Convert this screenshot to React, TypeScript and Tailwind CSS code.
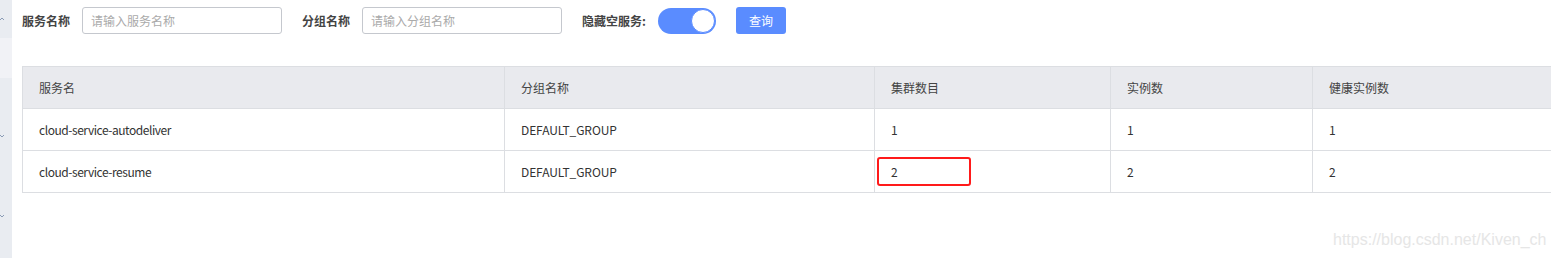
import React from "react";

const font = { fontFamily: '"Noto Sans CJK SC", "Noto Sans", sans-serif' };

const rows = [
  { name: "cloud-service-autodeliver", group: "DEFAULT_GROUP", cluster: "1", inst: "1", healthy: "1", mark: false },
  { name: "cloud-service-resume", group: "DEFAULT_GROUP", cluster: "2", inst: "2", healthy: "2", mark: true },
];

export default function App() {
  return (
    <div
      className="relative flex w-[1551px] h-[258px] overflow-hidden bg-white text-[12px] text-[#333]"
      style={font}
    >
      {/* sidebar strip */}
      <div className="relative w-[12px] shrink-0 bg-[#e9ecf1] flex flex-col">
        <div className="h-[38px]" />
        <div className="h-[40px] bg-[#f1f2f6]" />
        <svg className="absolute left-0 top-[17px]" width="4" height="4" viewBox="0 0 4 4">
          <path d="M0 3 L2 1 L4 3" stroke="#8a9bb5" strokeWidth="1" fill="none" />
        </svg>
        <svg className="absolute left-0 top-[134px]" width="4" height="4" viewBox="0 0 4 4">
          <path d="M0 1 L2 3 L4 1" stroke="#8a9bb5" strokeWidth="1" fill="none" />
        </svg>
        <svg className="absolute left-0 top-[214px]" width="4" height="4" viewBox="0 0 4 4">
          <path d="M0 1 L2 3 L4 1" stroke="#8a9bb5" strokeWidth="1" fill="none" />
        </svg>
      </div>

      <div className="flex-1 pl-[10px]">
        {/* search bar */}
        <div className="flex items-center mt-[7px] h-[27px]">
          <span className="font-bold text-[#444] leading-none">服务名称</span>
          <div className="ml-[12px] w-[200px] h-[27px] border border-[#c5c8ce] rounded-[3px] flex items-center pl-[8px] text-[#aaa]">
            请输入服务名称
          </div>
          <span className="ml-[20px] font-bold text-[#444] leading-none">分组名称</span>
          <div className="ml-[12px] w-[200px] h-[27px] border border-[#c5c8ce] rounded-[3px] flex items-center pl-[8px] text-[#aaa]">
            请输入分组名称
          </div>
          <span className="ml-[20px] font-bold text-[#444] leading-none">隐藏空服务:</span>
          <div className="ml-[12px] w-[58px] h-[26px] rounded-full bg-[#5a8cff] flex items-center justify-end p-[1px]">
            <div className="w-[24px] h-[24px] rounded-full bg-white border border-[#5a8cff]" />
          </div>
          <div className="ml-[20px] w-[50px] h-[27px] rounded-[3px] bg-[#5a8cff] text-white flex items-center justify-center">
            查询
          </div>
        </div>

        {/* table */}
        <table className="mt-[32px] border-collapse table-fixed w-[1600px]">
          <colgroup>
            <col className="w-[482px]" />
            <col className="w-[370px]" />
            <col className="w-[236px]" />
            <col className="w-[202px]" />
            <col className="w-[310px]" />
          </colgroup>
          <thead>
            <tr className="bg-[#e9eaee] h-[42px]">
              {["服务名", "分组名称", "集群数目", "实例数", "健康实例数"].map((h) => (
                <th key={h} className="border border-[#dcdee2] text-left font-normal text-[#444] pl-[16px]">
                  {h}
                </th>
              ))}
            </tr>
          </thead>
          <tbody>
            {rows.map((r) => (
              <tr key={r.name} className="h-[42px]">
                <td className="border border-[#dcdee2] pl-[16px] tracking-[-0.45px]">{r.name}</td>
                <td className="border border-[#dcdee2] pl-[16px] tracking-[-0.1px]">{r.group}</td>
                <td className="relative border border-[#dcdee2] pl-[16px]">
                  {r.cluster}
                  {r.mark && (
                    <div className="absolute left-[2px] top-[6px] w-[94px] h-[29px] border-2 border-[#ff1a1a] rounded-[3px]" />
                  )}
                </td>
                <td className="border border-[#dcdee2] pl-[16px]">{r.inst}</td>
                <td className="border border-[#dcdee2] pl-[16px]">{r.healthy}</td>
              </tr>
            ))}
          </tbody>
        </table>
      </div>

      <div
        className="absolute left-[1333px] top-[230px] text-[16px] leading-[20px] text-[#e6e6e6] whitespace-nowrap"
        style={{ fontFamily: '"Liberation Sans", Arial, sans-serif' }}
      >
        https://blog.csdn.net/Kiven_ch
      </div>
    </div>
  );
}
